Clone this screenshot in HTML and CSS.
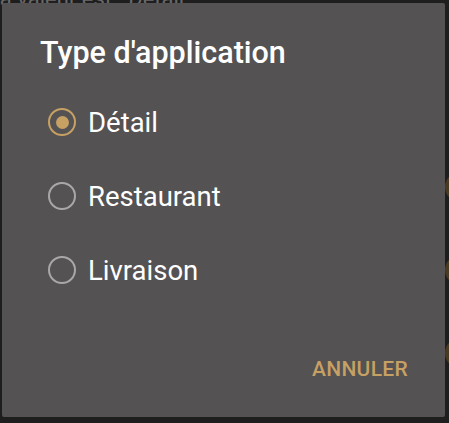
FILE: index.html
```html
<!DOCTYPE html>
<html lang="fr">
<head>
<meta charset="utf-8">
<link rel="stylesheet" href="styles.css">
</head>
<body>
<div class="page">
  <div class="page-line">La valeur est : Détail</div>
  <div class="page-row first"><span class="toggle"></span></div>
  <div class="page-row"><span class="toggle"></span></div>
  <div class="page-row"><span class="toggle"></span></div>
</div>
<div class="dialog">
  <h1 class="title">Type d'application</h1>
  <ul class="options">
    <li class="option"><span class="radio checked"></span><span class="label">Détail</span></li>
    <li class="option"><span class="radio"></span><span class="label">Restaurant</span></li>
    <li class="option"><span class="radio"></span><span class="label">Livraison</span></li>
  </ul>
  <div class="actions"><span class="btn">ANNULER</span></div>
</div>
</body>
</html>
```
FILE: styles.css
```css
html, body {
  margin: 0;
  padding: 0;
  width: 449px;
  height: 423px;
  overflow: hidden;
  background: #1f1e1f;
  font-family: Roboto, "Liberation Sans", sans-serif;
}
.page {
  display: flex;
  flex-direction: column;
}
.page-line {
  color: #6a6a6a;
  font-size: 22px;
  line-height: 22px;
  margin-top: -12px;
  margin-left: -12px;
  white-space: nowrap;
}
.page-row {
  display: flex;
  justify-content: flex-end;
  height: 30px;
  margin-top: 53px;
}
.page-row.first { margin-top: 162px; }
.toggle {
  width: 40px;
  height: 30px;
  border-radius: 15px;
  background: #4a3a21;
  margin-right: -36px;
}
.dialog {
  position: fixed;
  left: 2px;
  top: 3px;
  width: 443px;
  height: 414px;
  background: #545253;
  border-radius: 2px;
  box-sizing: border-box;
  display: flex;
  flex-direction: column;
}
.title {
  margin: 0;
  padding: 32px 0 0 38px;
  font-size: 30.5px;
  line-height: 36px;
  font-weight: 500;
  color: #ffffff;
}
.options {
  list-style: none;
  margin: 0;
  padding: 14px 0 0 0;
  display: flex;
  flex-direction: column;
}
.option {
  display: flex;
  align-items: center;
  height: 74px;
  padding-left: 46px;
}
.radio {
  width: 28px;
  height: 28px;
  box-sizing: border-box;
  border: 2.8px solid #a9a8a8;
  border-radius: 50%;
  display: flex;
  align-items: center;
  justify-content: center;
  flex: none;
}
.radio.checked {
  border-color: #c7a063;
}
.radio.checked::after {
  content: "";
  width: 13px;
  height: 13px;
  border-radius: 50%;
  background: #c7a063;
}
.label {
  margin-left: 12px;
  font-size: 27.5px;
  color: #ffffff;
}
.actions {
  margin-top: auto;
  display: flex;
  justify-content: flex-end;
  padding: 0 37px 36px 0;
}
.btn {
  font-size: 21px;
  font-weight: 500;
  color: #c7a063;
  letter-spacing: 0.3px;
}
```
